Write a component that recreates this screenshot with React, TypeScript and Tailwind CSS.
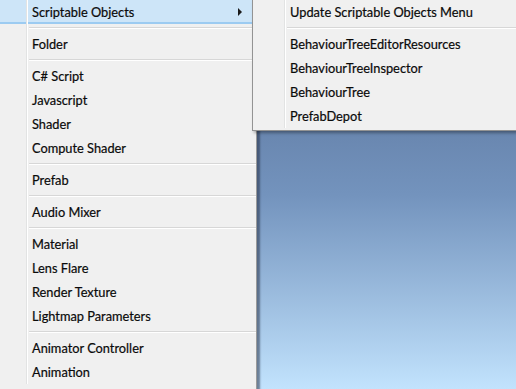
import type { ReactNode } from "react";

type Entry = { label: string } | "sep";

const mainItems: Entry[] = [
  { label: "Scriptable Objects" },
  "sep",
  { label: "Folder" },
  "sep",
  { label: "C# Script" },
  { label: "Javascript" },
  { label: "Shader" },
  { label: "Compute Shader" },
  "sep",
  { label: "Prefab" },
  "sep",
  { label: "Audio Mixer" },
  "sep",
  { label: "Material" },
  { label: "Lens Flare" },
  { label: "Render Texture" },
  { label: "Lightmap Parameters" },
  "sep",
  { label: "Animator Controller" },
  { label: "Animation" },
];

const subItems: Entry[] = [
  { label: "Update Scriptable Objects Menu" },
  "sep",
  { label: "BehaviourTreeEditorResources" },
  { label: "BehaviourTreeInspector" },
  { label: "BehaviourTree" },
  { label: "PrefabDepot" },
];

function Gutter({ width }: { width: string }) {
  return <div className={`${width} shrink-0 self-stretch border-r border-[#e2e3e3] shadow-[1px_0_0_#ffffff]`} />;
}

function Separator({ gutter }: { gutter: string }) {
  return (
    <div className="flex h-[8px]">
      <Gutter width={gutter} />
      <div className="flex-1 pl-[2px] pt-[3px]">
        <div className="border-t border-b border-t-[#d7d7d7] border-b-white" />
      </div>
    </div>
  );
}

function Row({ gutter, label, active, children }: { gutter: string; label: string; active?: boolean; children?: ReactNode }) {
  return (
    <div
      className={`flex h-[24px] items-center ${active ? "bg-[#cde5f8] shadow-[inset_0_-2px_0_#9ccbf1]" : ""}`}
    >
      <Gutter width={gutter} />
      <span className="flex-1 pl-[5px] text-[12.8px] leading-none text-[#0a0a0a] [-webkit-text-stroke:0.2px_#0a0a0a]">
        {label}
      </span>
      {children}
    </div>
  );
}

export default function App() {
  return (
    <div
      className="relative flex h-[389px] w-[516px] overflow-hidden bg-[#f0f0f0]"
      style={{ fontFamily: "Lato, 'Noto Sans', sans-serif" }}
    >
      {/* main context menu */}
      <div className="flex w-[257px] shrink-0 flex-col border-r border-[#9a9a9a] bg-[#f0f0f0]">
        {mainItems.map((item, i) =>
          item === "sep" ? (
            <Separator key={i} gutter="w-[27px]" />
          ) : (
            <Row key={i} gutter="w-[27px]" label={item.label} active={i === 0}>
              {i === 0 ? (
                <span className="mr-[14px] h-0 w-0 border-y-[4px] border-l-[4px] border-y-transparent border-l-[#1b1b1b]" />
              ) : null}
            </Row>
          )
        )}
      </div>

      {/* scene view */}
      <div className="flex-1 bg-gradient-to-b from-[#556d94] via-[#7393bd] to-[#c2e3fd] shadow-[inset_3px_3px_2px_rgba(40,50,70,0.55)]" />

      {/* submenu */}
      <div className="absolute left-[252px] right-0 top-0 flex h-[131px] flex-col border-b border-l border-[#939393] bg-[#f0f0f0] shadow-[2px_2px_3px_rgba(0,0,0,0.35)]">
        {subItems.map((item, i) =>
          item === "sep" ? (
            <Separator key={i} gutter="w-[32px]" />
          ) : (
            <Row key={i} gutter="w-[32px]" label={item.label} />
          )
        )}
      </div>
    </div>
  );
}
